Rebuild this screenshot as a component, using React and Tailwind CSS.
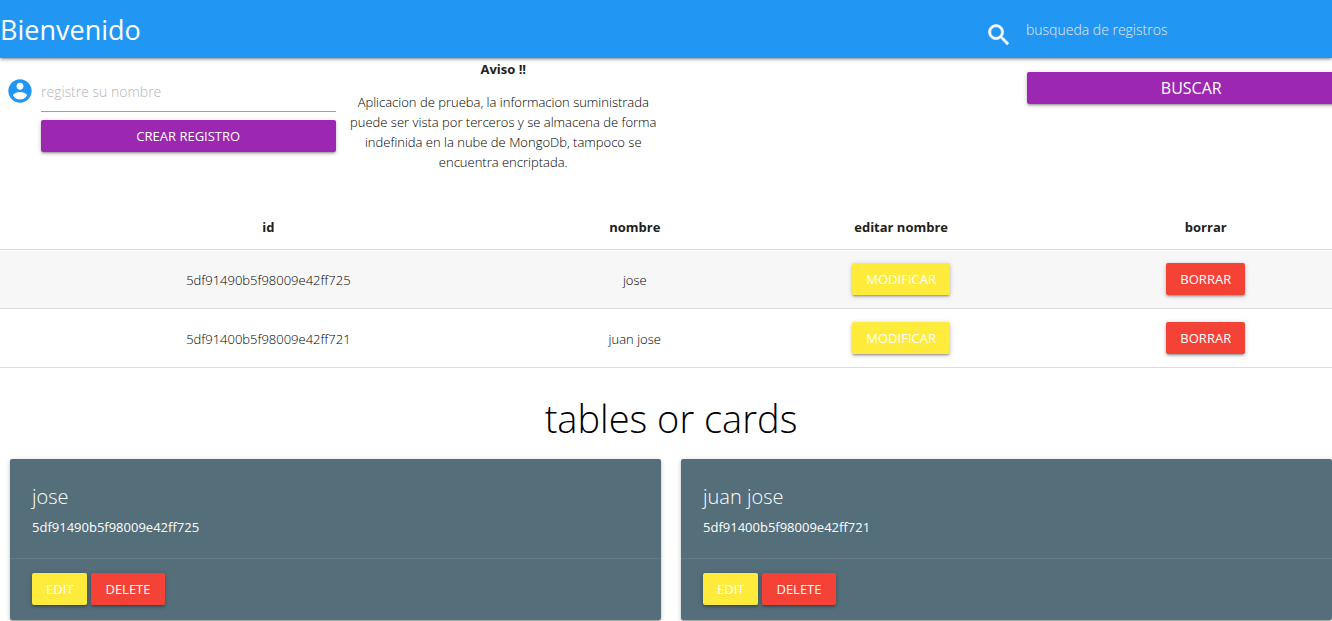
import React from "react";

const records = [
  { id: "5df91490b5f98009e42ff725", name: "jose" },
  { id: "5df91400b5f98009e42ff721", name: "juan jose" },
];

const raised =
  "shadow-[0_2px_2px_0_rgba(0,0,0,0.14),0_3px_1px_-2px_rgba(0,0,0,0.12),0_1px_5px_0_rgba(0,0,0,0.2)]";

const tones = {
  purple: "bg-[#9c27b0]",
  yellow: "bg-[#ffeb3b]",
  red: "bg-[#f44336]",
};

function Button({ tone, className = "px-3.5 text-[13px]", children, ...rest }) {
  return (
    <button
      className={`h-8 rounded-xs text-center text-white uppercase ${raised} ${tones[tone]} ${className}`}
      {...rest}
    >
      {children}
    </button>
  );
}

function Header() {
  return (
    <header className={`relative flex h-[58px] items-center bg-[#2196f3] text-white ${raised}`}>
      <a href="#" className="flex-1 pt-0.5 text-[27px] leading-[56px]">
        Bienvenido
      </a>
      <form id="busqueda" className="flex w-[calc(25%+14px)] items-center">
        <label htmlFor="buscar" className="w-[41px] shrink-0 pt-3">
          <svg viewBox="0 0 24 24" className="size-7 fill-white stroke-white stroke-[0.4]" role="img" aria-label="buscar">
            <path d="M15.5 14h-.79l-.28-.27C15.41 12.59 16 11.11 16 9.5 16 5.91 13.09 3 9.5 3S3 5.91 3 9.5 5.91 16 9.5 16c1.61 0 3.09-.59 4.23-1.57l.27.28v.79l5 4.99L20.49 19l-4.99-5zm-6 0C7.01 14 5 11.99 5 9.5S7.01 5 9.5 5 14 7.01 14 9.5 11.99 14 9.5 14z" />
          </svg>
        </label>
        <input
          id="buscar"
          type="text"
          placeholder="busqueda de registros"
          className="h-10 w-full min-w-0 bg-transparent text-sm font-light outline-none placeholder:text-[#e8e8e8]"
        />
      </form>
    </header>
  );
}

function Intro() {
  return (
    <section className="grid grid-cols-4 items-start">
      <form className="pt-3">
        <div className="flex items-center">
          <label htmlFor="nombre" className="w-[41px] shrink-0 pl-1.5">
            <svg viewBox="0 0 24 24" className="size-7 fill-[#2196f3]" role="img" aria-label="nombre">
              <path d="M12 2C6.48 2 2 6.48 2 12s4.48 10 10 10 10-4.48 10-10S17.52 2 12 2zm0 3c1.66 0 3 1.34 3 3s-1.34 3-3 3-3-1.34-3-3 1.34-3 3-3zm0 14.2c-2.5 0-4.71-1.28-6-3.22.03-1.99 4-3.08 6-3.08 1.99 0 5.97 1.09 6 3.08-1.29 1.94-3.5 3.22-6 3.22z" />
            </svg>
          </label>
          <input
            id="nombre"
            type="text"
            placeholder="registre su nombre"
            className="h-[42px] w-full min-w-0 border-b border-[#9e9e9e] bg-transparent pt-0.5 text-sm font-light outline-none placeholder:text-[#b4b4b4]"
          />
        </div>
        <div className="mt-2 pl-[41px]">
          <Button tone="purple" type="button" className="w-full text-[13px]">
            crear registro
          </Button>
        </div>
      </form>
      <div className="px-2.5 pt-px text-center">
        <h2 className="font-bold">Aviso !!</h2>
        <p className="mt-[13px] font-light text-black">
          Aplicacion de prueba, la informacion suministrada puede ser vista por terceros y se almacena de
          forma indefinida en la nube de MongoDb, tampoco se encuentra encriptada.
        </p>
      </div>
      <div className="col-start-4 pt-3.5 pl-5">
        <Button tone="purple" type="submit" form="busqueda" className="w-[calc(100%+14px)] text-base">
          buscar
        </Button>
      </div>
    </section>
  );
}

function RecordTable() {
  return (
    <table className="mt-7 w-full table-fixed border-collapse text-center">
      <thead>
        <tr className="h-[49px] border-b border-[#dcdcdc]">
          <th className="w-[40%] pt-1.5">id</th>
          <th className="w-[14.6%] pt-1.5">nombre</th>
          <th className="w-[25.1%] pt-1.5">editar nombre</th>
          <th className="w-[20.3%] pt-1.5">borrar</th>
        </tr>
      </thead>
      <tbody>
        {records.map((r) => (
          <tr key={r.id} className="h-[59px] border-b border-[#dcdcdc] odd:bg-[#f7f7f7]">
            <td className="pt-0.5 font-light text-black">{r.id}</td>
            <td className="pt-0.5 font-light text-black">{r.name}</td>
            <td>
              <Button tone="yellow" type="button">modificar</Button>
            </td>
            <td>
              <Button tone="red" type="button">borrar</Button>
            </td>
          </tr>
        ))}
      </tbody>
    </table>
  );
}

function Card({ record }) {
  return (
    <article className={`rounded-xs bg-[#546e7a] text-white ${raised}`}>
      <div className="px-[22px] pt-5 pb-[21px]">
        <h3 className="text-xl leading-9 font-light">{record.name}</h3>
        <p className="mt-0.5">{record.id}</p>
      </div>
      <div className="flex gap-1 border-t border-[#647b85] px-[22px] pt-3.5 pb-[15px]">
        <Button tone="yellow" type="button">edit</Button>
        <Button tone="red" type="button">delete</Button>
      </div>
    </article>
  );
}

export default function App() {
  return (
    <div className="overflow-x-hidden bg-white pb-0.5 font-['Open_Sans','Noto_Sans',sans-serif] text-[13px] leading-5 text-[#212121]">
      <Header />
      <main className="w-[calc(100%+10px)]">
        <Intro />
        <RecordTable />
        <h1 className="mt-6 text-center text-[38px] leading-[52px] font-light text-black">tables or cards</h1>
        <section className="mt-[15px] grid grid-cols-2 gap-5 px-2.5">
          {records.map((r) => (
            <Card key={r.id} record={r} />
          ))}
        </section>
      </main>
    </div>
  );
}
